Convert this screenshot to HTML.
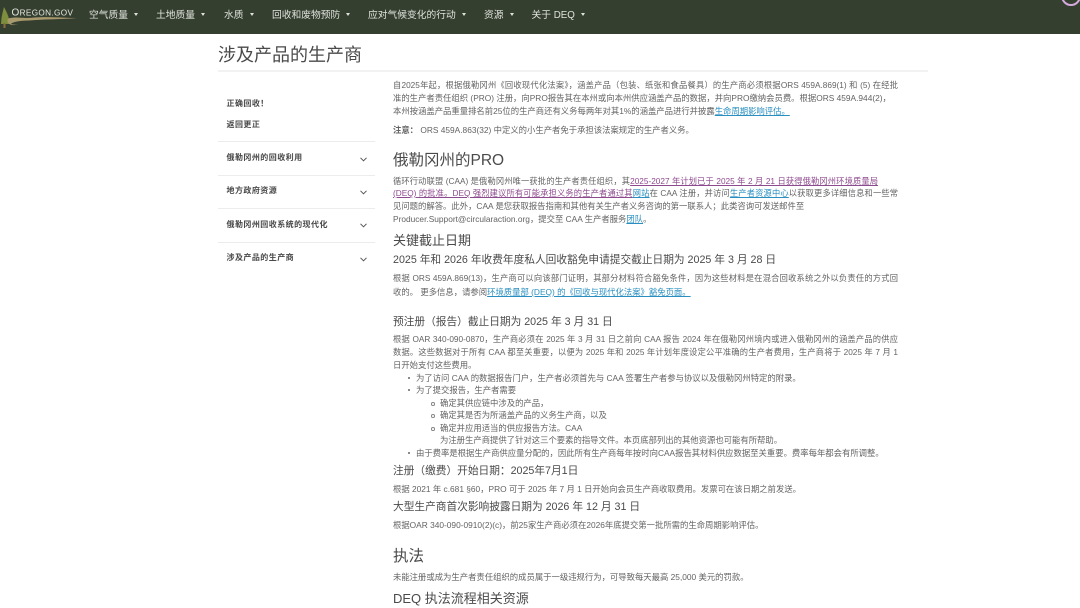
<!DOCTYPE html>
<html lang="zh"><head><meta charset="utf-8"><title>涉及产品的生产商</title>
<style>
html,body{margin:0;padding:0;background:#fff}
body{width:1080px;height:608px;overflow:hidden;position:relative;font-family:"Liberation Sans","Noto Sans CJK SC",sans-serif;color:#636363;font-size:8.36px}
#w{position:absolute;inset:0;filter:blur(.35px)}
.l{position:absolute;left:393px;white-space:nowrap;line-height:14px}
.j{width:505px;white-space:normal;text-align:justify;text-align-last:justify;font-size:8.25px}
.h2{font-size:15.5px;line-height:22px;color:#4a4a4a}
.h3{font-size:13px;line-height:18px;color:#4a4a4a}
.h4{font-size:10.7px;line-height:16px;color:#4a4a4a}
a{color:#2a8fc0;text-decoration:underline}
a.v{color:#8e4a8e}
.nav{position:absolute;left:0;top:0;width:1080px;height:34px;background:#353f30}
.n{position:absolute;top:9px;line-height:14px;color:#dfe2dc;font-size:9.75px;white-space:nowrap}
.n:after{content:"";display:inline-block;margin-left:6px;vertical-align:2px;border:2.5px solid transparent;border-top:3px solid #dfe2dc;border-bottom:0}
.s{position:absolute;left:226.500px;font-size:8px;font-weight:bold;color:#484848;line-height:12px;white-space:nowrap;letter-spacing:.45px}
.hr{position:absolute;left:218px;width:157px;height:1px;background:#ececec}
.c{position:absolute;left:359.500px;width:7px;height:5px}
.b{position:absolute;width:2px;height:2px;border-radius:50%;background:#666}
.o{position:absolute;width:1.500px;height:1.500px;border-radius:50%;border:.5px solid #888}
</style></head><body><div id="w">
<div class="nav">
<svg style="position:absolute;left:0;top:4px" width="78" height="24" viewBox="0 0 78 24"><path d="M4 3L7 9 8.500 13 9 20H1L1.500 14 2.500 9Z" fill="#7d8f3c"/><rect x="3.500" y="19" width="2" height="5" fill="#8a6d3f"/><path d="M8 14.500C18 12 22 15 34 13.500 48 12.500 62 14 77 14 60 15.500 48 15 36 16 26 17 20 16 12 19 10 20 12 21 18 20.500 10 22.500 6 19 8 14.500Z" fill="#a99a6e"/><text x="11.500" y="11.500" font-family="Liberation Sans" font-size="10" fill="#e6e8e2" letter-spacing=".35">O<tspan font-size="8.200">REGON.GOV</tspan></text></svg>
<span class="n" style="left:89px">空气质量</span>
<span class="n" style="left:156px">土地质量</span>
<span class="n" style="left:224px">水质</span>
<span class="n" style="left:272px">回收和废物预防</span>
<span class="n" style="left:368px">应对气候变化的行动</span>
<span class="n" style="left:484px">资源</span>
<span class="n" style="left:531.500px">关于 DEQ</span>
<div style="position:absolute;left:1061px;top:-14px;width:20px;height:20px;border-radius:50%;border:2px solid #d4a9dc;box-sizing:border-box;background:#353f30"></div>
</div>
<div class="l" style="left:218px;top:43px;font-size:18px;line-height:24px;color:#4a4a4a">涉及产品的生产商</div>
<div style="position:absolute;left:218px;top:70px;width:710px;height:2px;background:#f2f2f2"></div>

<div class="s" style="top:98px">正确回收！</div>
<div class="s" style="top:119px">返回更正</div>
<div class="hr" style="top:141px"></div>
<div class="s" style="top:152px">俄勒冈州的回收利用</div>
<svg class="c" style="top:157px" viewBox="0 0 7 5"><path d="M.5.8L3.500 3.800 6.500.8" fill="none" stroke="#555" stroke-width="1"/></svg>
<div class="hr" style="top:175px"></div>
<div class="s" style="top:185px">地方政府资源</div>
<svg class="c" style="top:190px" viewBox="0 0 7 5"><path d="M.5.8L3.500 3.800 6.500.8" fill="none" stroke="#555" stroke-width="1"/></svg>
<div class="hr" style="top:208px"></div>
<div class="s" style="top:219px">俄勒冈州回收系统的现代化</div>
<svg class="c" style="top:223px" viewBox="0 0 7 5"><path d="M.5.8L3.500 3.800 6.500.8" fill="none" stroke="#555" stroke-width="1"/></svg>
<div class="hr" style="top:242px"></div>
<div class="s" style="top:252px">涉及产品的生产商</div>
<svg class="c" style="top:257px" viewBox="0 0 7 5"><path d="M.5.8L3.500 3.800 6.500.8" fill="none" stroke="#555" stroke-width="1"/></svg>

<div class="l j" style="top:79px">自2025年起，根据俄勒冈州《回收现代化法案》，涵盖产品（包装、纸张和食品餐具）的生产商必须根据ORS 459A.869(1) 和 (5) 在经批</div>
<div class="l" style="top:91px">准的生产者责任组织 (PRO) 注册，向PRO报告其在本州或向本州供应涵盖产品的数据，并向PRO缴纳会员费。根据ORS 459A.944(2)，</div>
<div class="l" style="top:104px">本州按涵盖产品重量排名前25位的生产商还有义务每两年对其1%的涵盖产品进行并披露<a href="#">生命周期影响评估。</a></div>
<div class="l" style="top:123px"><b>注意：</b> ORS 459A.863(32) 中定义的小生产者免于承担该法案规定的生产者义务。</div>
<div class="l h2" style="top:150px">俄勒冈州的PRO</div>
<div class="l j" style="top:175px;width:485px">循环行动联盟 (CAA) 是俄勒冈州唯一获批的生产者责任组织，其<a class="v" href="#">2025-2027 年计划已于 2025 年 2 月 21 日获得俄勒冈州环境质量局</a></div>
<div class="l j" style="top:187px;width:505px"><a class="v" href="#">(DEQ) 的批准。DEQ 强烈建议所有可能承担义务的生产者通过其</a><a href="#">网站</a>在 CAA 注册，并访问<a href="#">生产者资源中心</a>以获取更多详细信息和一些常</div>
<div class="l" style="top:199px">见问题的解答。此外，CAA 是您获取报告指南和其他有关生产者义务咨询的第一联系人；此类咨询可发送邮件至</div>
<div class="l" style="top:212px">Producer.Support@circularaction.org，提交至 CAA 生产者服务<a href="#">团队</a>。</div>
<div class="l h3" style="top:232px">关键截止日期</div>
<div class="l h4" style="top:252px">2025 年和 2026 年收费年度私人回收豁免申请提交截止日期为 2025 年 3 月 28 日</div>
<div class="l j" style="top:272px">根据 ORS 459A.869(13)，生产商可以向该部门证明，其部分材料符合豁免条件，因为这些材料是在混合回收系统之外以负责任的方式回</div>
<div class="l" style="top:285px">收的。 更多信息，请参阅<a href="#">环境质量部 (DEQ) 的《回收与现代化法案》豁免页面。</a></div>
<div class="l h4" style="top:314px">预注册（报告）截止日期为 2025 年 3 月 31 日</div>
<div class="l j" style="top:333px">根据 OAR 340-090-0870，生产商必须在 2025 年 3 月 31 日之前向 CAA 报告 2024 年在俄勒冈州境内或进入俄勒冈州的涵盖产品的供应</div>
<div class="l j" style="top:346px">数据。这些数据对于所有 CAA 都至关重要，以便为 2025 年和 2025 年计划年度设定公平准确的生产者费用，生产商将于 2025 年 7 月 1</div>
<div class="l" style="top:358px">日开始支付这些费用。</div>
<div class="b" style="left:408px;top:377px"></div><div class="l" style="left:416px;top:371px">为了访问 CAA 的数据报告门户，生产者必须首先与 CAA 签署生产者参与协议以及俄勒冈州特定的附录。</div>
<div class="b" style="left:408px;top:389px"></div><div class="l" style="left:416px;top:383px">为了提交报告，生产者需要</div>
<div class="o" style="left:431px;top:402px"></div><div class="l" style="left:440px;top:396px">确定其供应链中涉及的产品，</div>
<div class="o" style="left:431px;top:414px"></div><div class="l" style="left:440px;top:408px">确定其是否为所涵盖产品的义务生产商，以及</div>
<div class="o" style="left:431px;top:427px"></div><div class="l" style="left:440px;top:421px">确定并应用适当的供应报告方法。CAA</div>
<div class="l" style="left:440px;top:433px">为注册生产商提供了针对这三个要素的指导文件。本页底部列出的其他资源也可能有所帮助。</div>
<div class="b" style="left:408px;top:452px"></div><div class="l" style="left:416px;top:446px">由于费率是根据生产商供应量分配的，因此所有生产商每年按时向CAA报告其材料供应数据至关重要。费率每年都会有所调整。</div>
<div class="l h4" style="top:463px">注册（缴费）开始日期：2025年7月1日</div>
<div class="l" style="top:482px">根据 2021 年 c.681 §60，PRO 可于 2025 年 7 月 1 日开始向会员生产商收取费用。发票可在该日期之前发送。</div>
<div class="l h4" style="top:499px">大型生产商首次影响披露日期为 2026 年 12 月 31 日</div>
<div class="l" style="top:518px">根据OAR 340-090-0910(2)(c)，前25家生产商必须在2026年底提交第一批所需的生命周期影响评估。</div>
<div class="l h2" style="top:546px">执法</div>
<div class="l" style="top:570px">未能注册或成为生产者责任组织的成员属于一级违规行为，可导致每天最高 25,000 美元的罚款。</div>
<div class="l h3" style="top:590px">DEQ 执法流程相关资源</div>
</div></body></html>
